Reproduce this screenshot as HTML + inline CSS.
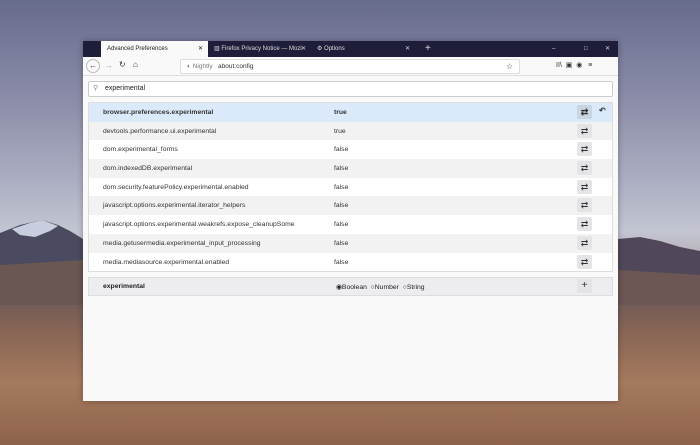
<!DOCTYPE html>
<html><head><style>
*{box-sizing:border-box;margin:0;padding:0}
body{width:700px;height:445px;overflow:hidden;position:relative;font-family:"Liberation Sans",sans-serif;
background:linear-gradient(#676b8c 0%,#8a8ca8 22%,#aeb1c4 42%,#c3c5d2 52%,#b9b3bb 57%,#6c5c62 62%,#6f5a58 67%,#8a6656 75%,#a57a5e 86%,#8f624b 100%)}
.mtn{position:absolute}
.win{position:absolute;left:83px;top:41px;width:535px;height:360px;background:#f9f9fa;box-shadow:0 0 6px rgba(0,0,0,.3)}
.tabs{height:16px;background:#1f1e3a;position:relative;color:#ddd;font-size:6px}
.tab{position:absolute;top:0;height:16px;line-height:16px;padding-left:6px}
.toolbar{height:19px;background:#f9f9fa;border-bottom:1px solid #ddd;position:relative;font-size:6.5px;color:#333}
.url{position:absolute;left:97px;top:2px;width:340px;height:15px;background:#fff;border:1px solid #ddd;border-radius:2px;line-height:13px;padding-left:6px}
.search{position:absolute;left:5px;top:40px;width:525px;height:16px;background:#fff;border:1px solid #ccc;border-radius:2px;font-size:7px;line-height:14px;padding-left:16px;color:#222}
.table{position:absolute;left:5px;top:61px;width:525px;border:1px solid #ddd;background:#fff}
.row{height:18.7px;position:relative;font-size:6.8px;color:#333}
.row:nth-child(even){background:#f2f2f3}
.row .n{position:absolute;left:14px;top:6px}
.row .v{position:absolute;left:245px;top:6px}
.btn{position:absolute;left:488px;top:2px;width:15px;height:14px;background:#e4e4e6;border-radius:2px;text-align:center;line-height:14px;font-size:9px;color:#333}
.add{position:absolute;left:5px;top:236px;width:525px;height:19px;background:#ededf0;border:1px solid #ddd;font-size:6.8px;color:#222}
.add .l{position:absolute;top:5px}
</style></head><body>
<svg class="mtn" style="left:0;top:215px" width="700" height="90">
<polygon points="0,18 20,10 42,5 58,10 70,16 83,24 83,90 0,90" fill="#4a4a60"/>
<polygon points="12,14 30,8 42,5 58,11 50,16 35,22 20,20" fill="#c9cede"/>
<polygon points="618,24 640,22 660,26 680,32 700,36 700,90 618,90" fill="#50485a"/>
<polygon points="0,50 83,45 83,90 0,90" fill="#6a5652"/>
<polygon points="618,55 700,60 700,90 618,90" fill="#6c5754"/>
</svg>
<div class="win">
<div class="tabs">
<div class="tab" style="left:18px;width:107px;background:#f9f9fa;color:#222">Advanced Preferences<span style="position:absolute;right:5px">✕</span></div>
<div class="tab" style="left:125px;width:103px">▥ Firefox Privacy Notice — Mozi<span style="position:absolute;right:5px">✕</span></div>
<div class="tab" style="left:228px;width:104px">⚙ Options<span style="position:absolute;right:5px">✕</span></div>
<div class="tab" style="left:336px;font-size:10px">+</div>
<div class="tab" style="left:463px">–</div><div class="tab" style="left:495px">□</div><div class="tab" style="left:516px">✕</div>
</div>
<div class="toolbar">
<span style="position:absolute;left:3px;top:2px;width:14px;height:14px;border:1px solid #bbb;border-radius:50%;text-align:center;line-height:12px;font-size:8px">←</span>
<span style="position:absolute;left:22px;top:4px;color:#aaa;font-size:8px">→</span>
<span style="position:absolute;left:36px;top:3px;font-size:8px">↻</span>
<span style="position:absolute;left:50px;top:3px;font-size:8px">⌂</span>
<div class="url"><span style="color:#777">◐ Nightly</span>&nbsp;&nbsp;&nbsp;about:config<span style="position:absolute;right:6px;font-size:8px">☆</span></div>
<span style="position:absolute;left:473px;top:4px;font-size:7px">II\ &nbsp;▣ &nbsp;◉ &nbsp;&nbsp;≡</span>
</div>
<div class="search"><span style="position:absolute;left:4px;color:#888">⚲</span>experimental</div>
<div class="table">
<div class="row" style="background:#dbeafb;font-weight:bold"><span class="n">browser.preferences.experimental</span><span class="v">true</span><span class="btn" style="background:#c8d5e3">⇄</span><span style="position:absolute;left:510px;top:3px;font-size:8px">↶</span></div>
<div class="row"><span class="n">devtools.performance.ui.experimental</span><span class="v">true</span><span class="btn">⇄</span></div>
<div class="row"><span class="n">dom.experimental_forms</span><span class="v">false</span><span class="btn">⇄</span></div>
<div class="row"><span class="n">dom.indexedDB.experimental</span><span class="v">false</span><span class="btn">⇄</span></div>
<div class="row"><span class="n">dom.security.featurePolicy.experimental.enabled</span><span class="v">false</span><span class="btn">⇄</span></div>
<div class="row"><span class="n">javascript.options.experimental.iterator_helpers</span><span class="v">false</span><span class="btn">⇄</span></div>
<div class="row"><span class="n">javascript.options.experimental.weakrefs.expose_cleanupSome</span><span class="v">false</span><span class="btn">⇄</span></div>
<div class="row"><span class="n">media.getusermedia.experimental_input_processing</span><span class="v">false</span><span class="btn">⇄</span></div>
<div class="row"><span class="n">media.mediasource.experimental.enabled</span><span class="v">false</span><span class="btn">⇄</span></div>
</div>
<div class="add"><span class="l" style="left:14px;font-weight:bold">experimental</span><span class="l" style="left:247px">◉Boolean &nbsp;○Number &nbsp;○String</span><span class="btn" style="top:1px;font-size:10px">+</span></div>
</div>
</body></html>
